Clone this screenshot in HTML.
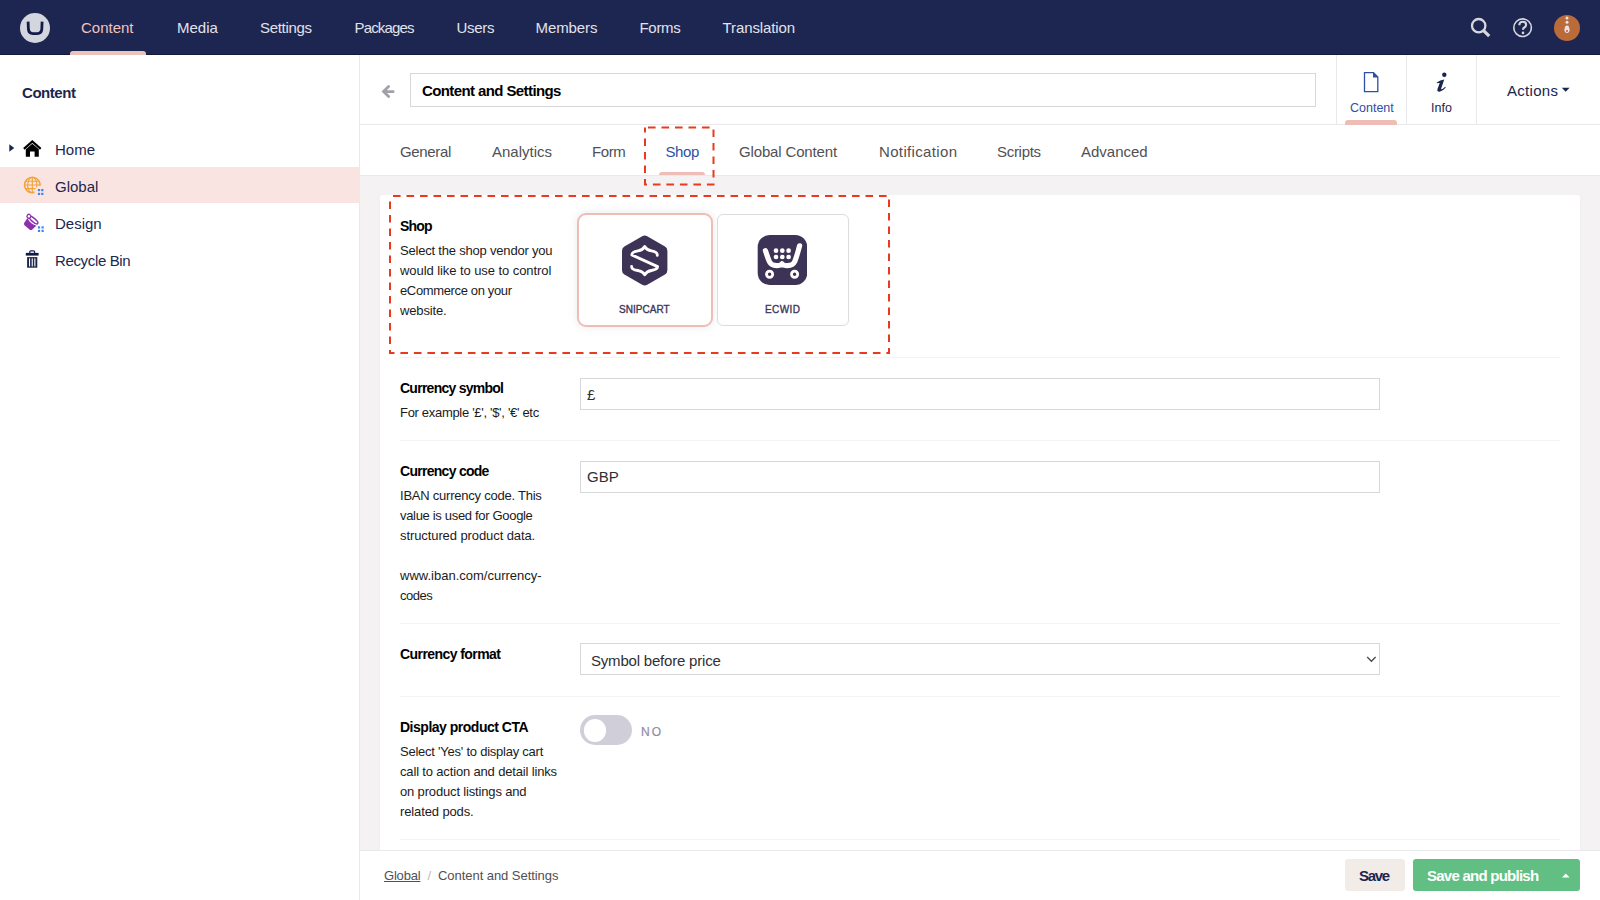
<!DOCTYPE html>
<html><head><meta charset="utf-8">
<style>
*{box-sizing:border-box;margin:0;padding:0}
html,body{width:1600px;height:900px;overflow:hidden;background:#fff;font-family:"Liberation Sans",sans-serif;color:#1b264f}
.abs{position:absolute}
#hdr{position:absolute;left:0;top:0;width:1600px;height:55px;background:#1d2650;border-bottom:1px solid #111a3c}
.nav{position:absolute;top:19px;font-size:15px;line-height:17px;color:#e2e2ea;white-space:nowrap}
#side{position:absolute;left:0;top:55px;width:360px;height:845px;background:#fff;border-right:1px solid #e9e9eb}
.tree{position:absolute;left:55px;font-size:15px;line-height:17px;color:#1b264f;white-space:nowrap}
#main{position:absolute;left:360px;top:55px;width:1240px;height:845px;background:#f4f2f3}
.tab{position:absolute;top:143px;font-size:15px;line-height:17px;color:#515054;white-space:nowrap}
.lbl{position:absolute;left:400px;font-size:14px;font-weight:bold;line-height:17px;color:#000;white-space:nowrap}
.desc{position:absolute;left:400px;font-size:13px;line-height:20px;color:#1b1b1d;white-space:nowrap}
.inp{position:absolute;left:580px;width:800px;height:32px;border:1px solid #d8d7d9;background:#fff}
.sep{position:absolute;left:400px;width:1160px;height:1px;background:#f3f3f5}
</style></head><body>
<!-- header -->
<div id="hdr"></div>
<div class="abs" style="left:20px;top:12.5px;width:30px;height:30px;border-radius:50%;background:#d3d6de"></div>
<svg class="abs" style="left:20px;top:12px" width="30" height="31" viewBox="0 0 30 31"><path d="M8.1 9.6 L8.4 17.2 Q8.7 21.5 13 21.6 L17.2 21.6 Q21.5 21.5 21.8 17.2 L22.1 9.6" fill="none" stroke="#131c48" stroke-width="2.8"/></svg>
<div class="nav" style="left:81px;color:#f5c1bc">Content</div>
<div class="abs" style="left:70px;top:51px;width:76px;height:4px;background:#ecc3bc;border-radius:3px 3px 0 0"></div>
<div class="nav" style="left:177px">Media</div>
<div class="nav" style="left:260px;letter-spacing:-0.3px">Settings</div>
<div class="nav" style="left:354.5px;letter-spacing:-0.85px">Packages</div>
<div class="nav" style="left:456.5px;letter-spacing:-0.3px">Users</div>
<div class="nav" style="left:535.5px;letter-spacing:-0.1px">Members</div>
<div class="nav" style="left:639.5px;letter-spacing:-0.3px">Forms</div>
<div class="nav" style="left:722.5px;letter-spacing:-0.1px">Translation</div>

<!-- header right icons -->
<svg class="abs" style="left:1468px;top:15px" width="26" height="26" viewBox="0 0 26 26"><circle cx="10.7" cy="10.7" r="6.7" fill="none" stroke="#d8d7de" stroke-width="2.3"/><path d="M15.6 15.6 L21.2 21.2" stroke="#d8d7de" stroke-width="3.2" stroke-linecap="butt"/></svg>
<svg class="abs" style="left:1510px;top:15px" width="26" height="26" viewBox="0 0 26 26"><circle cx="12.6" cy="12.7" r="8.8" fill="none" stroke="#d8d7de" stroke-width="1.6"/><path d="M9.3 10.2 Q9.3 6.8 12.7 6.8 Q16.1 6.8 16.1 9.8 Q16.1 11.6 14.3 12.5 Q13 13.2 13 14.8" fill="none" stroke="#d8d7de" stroke-width="2.1"/><circle cx="13" cy="17.9" r="1.3" fill="#d8d7de"/></svg>
<div class="abs" style="left:1554px;top:15px;width:26px;height:26px;border-radius:50%;background:#bb6a3a"></div>
<svg class="abs" style="left:1554px;top:15px" width="26" height="26" viewBox="0 0 26 26"><circle cx="13" cy="3" r="1.5" fill="#e8e4ea"/><circle cx="13" cy="7.2" r="1.5" fill="#e8e4ea"/><path d="M11.2 11.5 Q13 9.5 14.8 11.5 L15.6 14.6 Q15.6 18 13 18 Q10.4 18 10.4 14.6 Z" fill="#e8e4ea"/><circle cx="13" cy="16" r="1" fill="#d2532a"/></svg>

<!-- sidebar -->
<div id="side"></div>
<div class="abs" style="left:22px;top:83.5px;font-size:15px;font-weight:bold;line-height:17px;color:#1b264f;letter-spacing:-0.45px">Content</div>
<div class="abs" style="left:0;top:167px;width:359px;height:36px;background:#f9e4e2"></div>
<svg class="abs" style="left:9px;top:144px" width="6" height="8" viewBox="0 0 6 8"><path d="M0.3 0.3 L5.3 4 L0.3 7.7 Z" fill="#1b264f"/></svg>
<svg class="abs" style="left:22px;top:139px" width="20" height="19" viewBox="0 0 20 19"><path d="M1.9 9.9 L10.3 2.4 L18.7 9.9" fill="none" stroke="#000" stroke-width="2.2"/><path d="M3.8 10.3 L10.3 4.7 L16.8 10.3 L16.8 17.7 L12.6 17.7 L12.6 12.6 L8 12.6 L8 17.7 L3.8 17.7 Z" fill="#000"/></svg>
<svg class="abs" style="left:22px;top:175px" width="24" height="22" viewBox="0 0 24 22"><defs><clipPath id="gc"><path clip-rule="evenodd" d="M0 0 H24 V22 H0 Z M12.3 17.2 A6.5 6.5 0 1 0 25.3 17.2 A6.5 6.5 0 1 0 12.3 17.2 Z"/></clipPath></defs><g clip-path="url(#gc)" fill="none" stroke="#f2a23b" stroke-width="1.1"><circle cx="10.3" cy="10" r="7.8" stroke-width="1.5"/><ellipse cx="10.3" cy="10" rx="4.6" ry="7.8"/><path d="M10.3 2.3 V17.7 M2.5 10 H18.1 M3.3 6.2 H17.3 M3.3 13.6 H17.3"/></g><g fill="#3d85e8"><rect x="15.9" y="14" width="2.2" height="2.2"/><rect x="19.2" y="14" width="2.2" height="2.2"/><rect x="15.9" y="17.8" width="2.2" height="2.2"/><rect x="19.2" y="17.8" width="2.2" height="2.2"/></g></svg>
<svg class="abs" style="left:22px;top:212px" width="24" height="22" viewBox="0 0 24 22"><g transform="translate(11.5 8) rotate(40.6)"><path d="M-5.8 2.5 Q0 5.4 5.8 2.5 L5.3 8 Q5 9.6 3.5 9.8 L-3.5 9.8 Q-5 9.6 -5.3 8 Z" fill="#8f2fae"/><ellipse cx="0" cy="0" rx="5.6" ry="1.8" fill="#fff" stroke="#8f2fae" stroke-width="1.4"/><circle cx="-5.9" cy="0.2" r="1.9" fill="#fff" stroke="#8f2fae" stroke-width="1.3"/></g><g fill="#3d85e8"><rect x="15.9" y="14.3" width="2.2" height="2.2"/><rect x="19.5" y="14.3" width="2.2" height="2.2"/><rect x="15.9" y="17.8" width="2.2" height="2.2"/><rect x="19.5" y="17.8" width="2.2" height="2.2"/></g></svg>
<svg class="abs" style="left:24px;top:249px" width="16" height="20" viewBox="0 0 16 20"><path d="M5.8 3.9 V2.8 Q5.8 1.8 6.8 1.8 H9.6 Q10.6 1.8 10.6 2.8 V3.9" fill="none" stroke="#1b264f" stroke-width="1.3"/><rect x="1.8" y="3.9" width="12.8" height="2.7" fill="#0f1a45"/><path d="M3.1 8.1 H13.3 V18.7 H3.1 Z" fill="#1b264f"/><rect x="5" y="9.4" width="1.1" height="8" fill="#fff"/><rect x="7.7" y="9.4" width="1.1" height="8" fill="#fff"/><rect x="10.3" y="9.4" width="1.1" height="8" fill="#fff"/></svg>
<div class="tree" style="top:141px">Home</div>
<div class="tree" style="top:178px">Global</div>
<div class="tree" style="top:215px">Design</div>
<div class="tree" style="top:252px;letter-spacing:-0.35px">Recycle Bin</div>

<!-- main -->
<div id="main"></div>
<div class="abs" style="left:360px;top:55px;width:1240px;height:70px;background:#fff;border-bottom:1px solid #e9e9eb"></div>
<div class="abs" style="left:360px;top:125px;width:1240px;height:51px;background:#fff;border-bottom:1px solid #e9e9eb"></div>
<div class="abs" style="left:410px;top:73px;width:906px;height:34px;border:1px solid #d8d7d9;background:#fff"></div>
<div class="abs" style="left:422px;top:82px;font-size:15px;font-weight:bold;line-height:17px;color:#000;white-space:nowrap;letter-spacing:-0.6px">Content and Settings</div>

<svg class="abs" style="left:380px;top:83px" width="16" height="16" viewBox="0 0 16 16"><path d="M8.6 3.6 L3.5 8.6 L8.6 13.6 M4 8.6 H13.2" fill="none" stroke="#a2a1a6" stroke-width="2.8" stroke-linecap="round" stroke-linejoin="miter"/></svg>
<!-- app buttons -->
<div class="abs" style="left:1336px;top:55px;width:1px;height:70px;background:#e9e9eb"></div>
<div class="abs" style="left:1406px;top:55px;width:1px;height:70px;background:#e9e9eb"></div>
<div class="abs" style="left:1476px;top:55px;width:1px;height:70px;background:#e9e9eb"></div>
<svg class="abs" style="left:1362px;top:71px" width="18" height="23" viewBox="0 0 18 23"><path d="M2.5 1.6 H11.5 L15.8 6 V20.6 H2.5 Z" fill="none" stroke="#2e4fa5" stroke-width="1.3"/><path d="M11 1.3 L16.2 6.5 L11 6.5 Z" fill="#2e4fa5"/></svg>
<div class="abs" style="left:1350px;top:101px;font-size:12.5px;line-height:14px;color:#2e4fa5;white-space:nowrap">Content</div>
<div class="abs" style="left:1345px;top:120px;width:52px;height:5px;background:#f0bcb6;border-radius:3px 3px 0 0"></div>
<svg class="abs" style="left:1434px;top:70px" width="14" height="24" viewBox="0 0 14 24"><circle cx="10.3" cy="4.7" r="2.2" fill="#1b264f"/><path d="M2.8 12.4 Q6.2 10 10.2 9.6 L7.2 18.6 Q6.9 19.7 8 19.2 Q9.4 18.6 11.2 16.8 L11.8 17.5 Q8.8 21.4 5.6 21.7 Q2.7 21.9 3.5 19 L5.7 13 Q4.6 12.7 3.1 13.2 Z" fill="#1b264f"/></svg>
<div class="abs" style="left:1431px;top:101px;font-size:12.5px;line-height:14px;color:#1b264f;white-space:nowrap">Info</div>
<div class="abs" style="left:1507px;top:82px;font-size:15px;line-height:17px;color:#1b264f;white-space:nowrap;letter-spacing:0.3px">Actions</div>
<svg class="abs" style="left:1561px;top:87px" width="10" height="6" viewBox="0 0 10 6"><path d="M0.8 0.8 H8.6 L4.7 4.8 Z" fill="#1b264f"/></svg>
<!-- tabs -->
<div class="tab" style="left:400px;letter-spacing:-0.35px">General</div>
<div class="tab" style="left:492px;letter-spacing:0px">Analytics</div>
<div class="tab" style="left:592px;letter-spacing:-0.4px">Form</div>
<div class="tab" style="left:665.5px;color:#2e4fa5;letter-spacing:-0.4px">Shop</div>
<div class="abs" style="left:659px;top:172px;width:46px;height:3px;background:#f0bcb6;border-radius:3px 3px 0 0"></div>
<div class="tab" style="left:739px;letter-spacing:-0.15px">Global Content</div>
<div class="tab" style="left:879px;letter-spacing:0.35px">Notification</div>
<div class="tab" style="left:997px;letter-spacing:-0.3px">Scripts</div>
<div class="tab" style="left:1081px">Advanced</div>

<div class="abs" style="left:380px;top:195px;width:1200px;height:655px;background:#fff;border-radius:3px 3px 0 0;box-shadow:0 1px 1px 0 rgba(0,0,0,0.12)"></div>

<!-- properties -->
<div class="lbl" style="top:218px;letter-spacing:-0.8px">Shop</div>
<div class="desc" style="top:241px"><div style="letter-spacing:-0.2px">Select the shop vendor you</div><div style="letter-spacing:-0.07px">would like to use to control</div><div style="letter-spacing:-0.36px">eCommerce on your</div><div style="letter-spacing:-0.14px">website.</div></div>
<!-- cards -->
<div class="abs" style="left:577px;top:213px;width:136px;height:114px;border:2px solid #efbcb6;border-radius:9px;background:#fff;box-shadow:0 0 8px rgba(160,170,190,0.25)"></div>
<div class="abs" style="left:717px;top:214px;width:132px;height:112px;border:1px solid #dcdbe0;border-radius:6px;background:#fff"></div>
<svg class="abs" style="left:622px;top:235px" width="46" height="51" viewBox="0 0 46 50" preserveAspectRatio="none"><path d="M20.2 1.3 Q22.7 -0.2 25.2 1.3 L43 11.2 Q45.4 12.6 45.4 15.4 L45.4 34.6 Q45.4 37.4 43 38.8 L25.2 48.7 Q22.7 50.2 20.2 48.7 L2.4 38.8 Q0 37.4 0 34.6 L0 15.4 Q0 12.6 2.4 11.2 Z" fill="#3d3356"/><path d="M35.3 20 C35.5 17.5 34 16.3 29.5 15.6 C26 15 24 13.5 22.7 11.2 C21.4 13.5 19.5 15 16 15.6 C11.5 16.3 9.8 17.2 9.8 19.5 L35.6 31 C35.6 33.2 34 34.2 29.4 34.8 C26 35.3 24 36.6 22.7 39 C21.4 36.6 19.3 35.3 15.8 34.8 C11.4 34.2 9.6 33 9.6 30.8" fill="none" stroke="#fff" stroke-width="2.8" stroke-linecap="round" stroke-linejoin="round"/></svg>
<div class="abs" style="left:619px;top:304px;font-size:10px;font-weight:normal;-webkit-text-stroke:0.35px #3d3659;line-height:11px;letter-spacing:0.05px;color:#3d3659;white-space:nowrap">SNIPCART</div>
<svg class="abs" style="left:757px;top:235px" width="50" height="50" viewBox="0 0 50 50"><rect x="0.7" y="0" width="49.6" height="50" rx="12" fill="#3d3356"/><path d="M8.4 15.6 C10 20 11 24 12.6 27 C14 30 16.5 30.6 19.5 30.6 C22.2 30.6 24 30 25 28.8 C26 30 27.8 30.6 30.5 30.6 C33.5 30.6 36.2 30 37.6 26.8 C39.6 22.5 41.2 15.5 42.6 10.8" fill="none" stroke="#fff" stroke-width="5.2" stroke-linecap="round" stroke-linejoin="round"/><g fill="#fff"><circle cx="19" cy="15.7" r="2.35"/><circle cx="25.3" cy="15.7" r="2.35"/><circle cx="31.6" cy="15.7" r="2.35"/><circle cx="19" cy="22" r="2.35"/><circle cx="25.3" cy="22" r="2.35"/><circle cx="31.6" cy="22" r="2.35"/></g><circle cx="12.6" cy="39.3" r="3.1" fill="none" stroke="#fff" stroke-width="2.8"/><circle cx="37.6" cy="39.3" r="3.1" fill="none" stroke="#fff" stroke-width="2.8"/></svg>
<div class="abs" style="left:765px;top:304px;font-size:10px;font-weight:normal;-webkit-text-stroke:0.35px #3d3659;line-height:11px;letter-spacing:0.4px;color:#3d3659;white-space:nowrap">ECWID</div>

<div class="sep" style="top:357px"></div>
<div class="lbl" style="top:380px;letter-spacing:-0.74px">Currency symbol</div>
<div class="desc" style="top:403px;letter-spacing:-0.31px">For example '£', '$', '€' etc</div>
<div class="inp" style="top:377.5px;height:32px"></div>
<div class="abs" style="left:587px;top:386px;font-size:15px;line-height:17px;color:#303033">£</div>

<div class="sep" style="top:440px"></div>
<div class="lbl" style="top:463px;letter-spacing:-0.72px">Currency code</div>
<div class="desc" style="top:486px"><div style="letter-spacing:-0.23px">IBAN currency code. This</div><div style="letter-spacing:-0.32px">value is used for Google</div><div style="letter-spacing:-0.09px">structured product data.</div><div style="letter-spacing:0px">&nbsp;</div><div style="letter-spacing:0px">www.iban.com/currency-</div><div style="letter-spacing:-0.5px">codes</div></div>
<div class="inp" style="top:460.5px;height:32px"></div>
<div class="abs" style="left:587px;top:468px;font-size:15px;line-height:17px;color:#303033">GBP</div>

<div class="sep" style="top:623px"></div>
<div class="lbl" style="top:646px;letter-spacing:-0.57px">Currency format</div>
<div class="inp" style="top:643px;height:32px"></div>
<div class="abs" style="left:591px;top:652px;font-size:15px;line-height:17px;color:#303033;letter-spacing:-0.2px">Symbol before price</div>
<svg class="abs" style="left:1365px;top:654px" width="12" height="10" viewBox="0 0 12 10"><path d="M2.2 3 L6.4 7.3 L10.6 3" fill="none" stroke="#48484c" stroke-width="1.25"/></svg>

<div class="sep" style="top:696px"></div>
<div class="lbl" style="top:719px;letter-spacing:-0.49px">Display product CTA</div>
<div class="desc" style="top:742px"><div style="letter-spacing:-0.24px">Select 'Yes' to display cart</div><div style="letter-spacing:-0.16px">call to action and detail links</div><div style="letter-spacing:-0.16px">on product listings and</div><div style="letter-spacing:-0.12px">related pods.</div></div>
<div class="abs" style="left:580px;top:715px;width:52px;height:30px;border-radius:15px;background:#d0cfd9"></div>
<div class="abs" style="left:583.5px;top:719px;width:22.5px;height:22.5px;border-radius:50%;background:#fff"></div>
<div class="abs" style="left:641px;top:726px;font-size:12px;font-weight:normal;-webkit-text-stroke:0.2px #908ca6;line-height:13px;letter-spacing:2px;color:#908ca6">NO</div>
<div class="sep" style="top:839px"></div>

<!-- dashed annotation boxes -->
<svg class="abs" style="left:0;top:0" width="1600" height="900"><rect x="645" y="127.5" width="68.5" height="57" fill="none" stroke="#e93a1f" stroke-width="2" stroke-dasharray="7.6 5.9" stroke-dashoffset="10.5"/><rect x="390" y="196" width="499" height="157" fill="none" stroke="#e93a1f" stroke-width="2" stroke-dasharray="7.6 5.9" stroke-dashoffset="10.5"/></svg>

<!-- footer -->
<div class="abs" style="left:360px;top:850px;width:1240px;height:50px;background:#fff;border-top:1px solid #e9e9eb"></div>
<div class="abs" style="left:384px;top:868px;font-size:13px;line-height:15px;color:#515054;white-space:nowrap"><span style="text-decoration:underline;letter-spacing:-0.2px">Global</span><span style="color:#bbbabf;margin:0 7px 0 7px">/</span><span style="letter-spacing:-0.05px">Content and Settings</span></div>
<div class="abs" style="left:1345px;top:859px;width:60px;height:32px;border-radius:3px;background:#f2ece9"></div>
<div class="abs" style="left:1359px;top:867px;font-size:15px;font-weight:bold;line-height:17px;color:#1b264f;letter-spacing:-1.3px">Save</div>
<div class="abs" style="left:1413px;top:859px;width:167px;height:32px;border-radius:3px;background:#61bf84"></div>
<div class="abs" style="left:1427px;top:867px;font-size:15px;font-weight:bold;line-height:17px;color:#fff;letter-spacing:-0.75px;white-space:nowrap">Save and publish</div>
<svg class="abs" style="left:1560px;top:872px" width="12" height="8" viewBox="0 0 12 8"><path d="M2 5.5 L5.8 1.6 L9.6 5.5 Z" fill="#fff"/></svg>

</body></html>
